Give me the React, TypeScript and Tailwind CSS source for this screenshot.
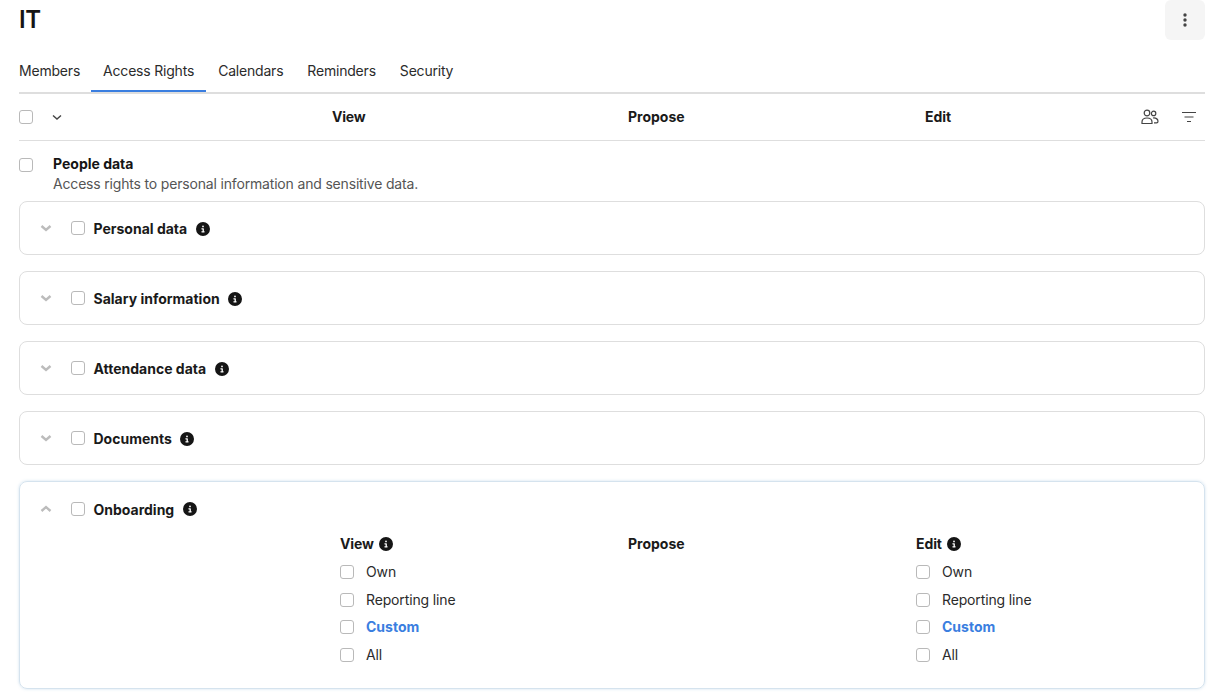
import { FaCircleInfo } from "react-icons/fa6";

const tabs = ["Members", "Access Rights", "Calendars", "Reminders", "Security"];
const sections = ["Personal data", "Salary information", "Attendance data", "Documents"];
const options = ["Own", "Reporting line", "Custom", "All"];

const Checkbox = () => (
  <span className="block w-[14px] h-[14px] shrink-0 rounded-[3px] border border-[#b9b9b9] bg-white" />
);

const Info = ({ className = "" }: { className?: string }) => (
  <FaCircleInfo className={`text-[#151515] shrink-0 ${className}`} size={14} />
);

// small solid chevron used on the accordion cards
const CardChevron = ({ up = false }: { up?: boolean }) => (
  <svg width="14" height="14" viewBox="0 0 14 14" fill="none" stroke="#bcbcbc" strokeWidth="2.4" className="shrink-0">
    <path d={up ? "M2.5 9 7 5l4.5 4" : "M2.5 5 7 9l4.5-4"} />
  </svg>
);

const OptionColumn = ({ title }: { title: string }) => (
  <div className="w-[288px]">
    <div className="flex items-center gap-[5px] h-[20px] font-bold text-[#1a1a1a] tracking-[-0.1px]">
      {title}
      <Info />
    </div>
    <div className="flex flex-col gap-[7.6px] mt-[8px]">
      {options.map((option) => (
        <div key={option} className="flex items-center gap-[12px] h-[20px]">
          <Checkbox />
          <span className={option === "Custom" ? "font-bold text-[#3a7ee0]" : "text-[#2b2b2b] tracking-[-0.14px]"}>
            {option}
          </span>
        </div>
      ))}
    </div>
  </div>
);

const App = () => {
  return (
    <div className="w-[1218px] h-[700px] overflow-hidden bg-white pl-[19px] pr-[13px] text-[14px] leading-[20px] text-[#1a1a1a] font-['Inter',sans-serif]">
      <div className="flex justify-between h-[40px]">
        <h1 className="text-[24px] leading-[40px] font-semibold text-[#151515] tracking-[-0.5px]">IT</h1>
        <button className="w-[40px] h-[40px] rounded-[6px] bg-[#f5f5f5] flex items-center justify-center">
          <svg width="4" height="14" viewBox="0 0 4 14" fill="#444">
            <circle cx="2" cy="2" r="1.7" />
            <circle cx="2" cy="7" r="1.7" />
            <circle cx="2" cy="12" r="1.7" />
          </svg>
        </button>
      </div>

      <div className="flex h-[54px] pt-[11px] border-b-2 border-[#dedede]">
        {tabs.map((tab, i) => (
          <div
            key={tab}
            className={`h-[41px] pt-[10px] -mb-[2px] text-[#2b2b2b] tracking-[-0.2px] ${i === 0 ? "pr-[11px]" : "px-3"} ${
              tab === "Access Rights" ? "border-b-2 border-[#3a7ee0]" : ""
            }`}
          >
            {tab}
          </div>
        ))}
      </div>

      <div className="grid grid-cols-[313px_296px_297px_1fr] items-center h-[47px] border-b border-[#dedede] font-bold">
        <div className="flex items-center">
          <Checkbox />
          <svg width="14" height="14" viewBox="0 0 14 14" fill="none" stroke="#444" strokeWidth="1.4" className="ml-[17px]">
            <path d="M3 5.5 7 9l4-3.5" />
          </svg>
        </div>
        <div className="tracking-[-0.2px]">View</div>
        <div>Propose</div>
        <div className="flex items-center justify-between">
          <span>Edit</span>
          <div className="flex items-center gap-[23px] pr-[9px]">
            <svg width="18" height="16" viewBox="0 0 18 16" fill="none" stroke="#444" strokeWidth="1.2">
              <circle cx="6" cy="4" r="2.8" />
              <circle cx="12.6" cy="4.4" r="2.2" />
              <path d="M1 14.5v-1.5c0-2.6 2.2-4 5-4s5 1.4 5 4v1.5z" />
              <path d="M12 9c2.8-.4 5 1 5 3.2 0 1-.5 1.6-1.5 1.6h-2.5" />
            </svg>
            <svg width="14" height="12" viewBox="0 0 14 12" fill="none" stroke="#444" strokeWidth="1.2">
              <path d="M0 1.5h14M2.5 6h9M5 10.5h4" />
            </svg>
          </div>
        </div>
      </div>

      <div className="flex h-[60px] pt-[13px]">
        <div className="pt-[4px]">
          <Checkbox />
        </div>
        <div className="ml-[20px]">
          <div className="font-bold text-[#151515]">People data</div>
          <div className="text-[#555] tracking-[-0.175px]">Access rights to personal information and sensitive data.</div>
        </div>
      </div>

      <div className="flex flex-col gap-[16px]">
        {sections.map((section) => (
          <div key={section} className="flex items-center h-[54px] rounded-[8px] border border-[#dedede] pl-[19px]">
            <CardChevron />
            <span className="ml-[18px]">
              <Checkbox />
            </span>
            <span className="ml-[8.5px] mr-[8.5px] pt-[2px] font-bold">{section}</span>
            <Info className="mt-[1px]" />
          </div>
        ))}

        <div className="h-[208px] rounded-[8px] border border-[#d5e3ee] shadow-[0_0_3px_rgba(120,170,210,0.35)] pl-[19px]">
          <div className="flex items-center h-[54px]">
            <CardChevron up />
            <span className="ml-[18px]">
              <Checkbox />
            </span>
            <span className="ml-[8.5px] mr-[8.5px] pt-[1px] font-bold">Onboarding</span>
            <Info />
          </div>
          <div className="flex pl-[301px] -mt-[2px]">
            <OptionColumn title="View" />
            <div className="w-[288px] h-[20px] font-bold">Propose</div>
            <OptionColumn title="Edit" />
          </div>
        </div>
      </div>
    </div>
  );
};

export default App;
